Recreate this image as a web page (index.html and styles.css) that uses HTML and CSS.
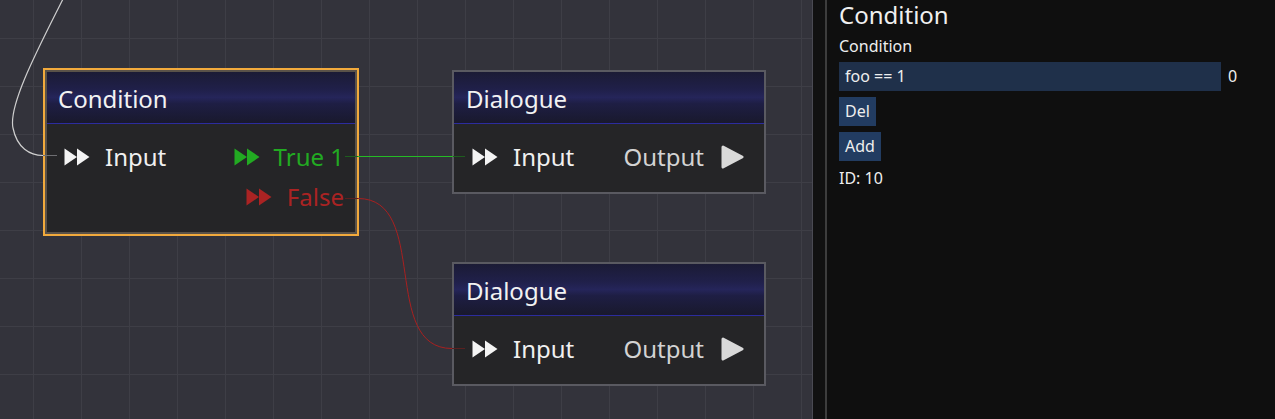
FILE: index.html
```html
<!DOCTYPE html>
<html>
<head>
<meta charset="utf-8">
<link rel="stylesheet" href="styles.css">
</head>
<body>
<div class="app">
  <div class="canvas">
    <div class="node selected node-cond">
      <div class="node-title">Condition</div>
      <div class="node-body">
        <div class="row">
          <div class="port">
            <svg class="ff" viewBox="0 0 26 18"><polygon points="0.5,0.5 13,9 0.5,17.5"/><polygon points="13,0.5 25.5,9 13,17.5"/></svg>
            <span class="port-label">Input</span>
          </div>
          <div class="port true">
            <svg class="ff" viewBox="0 0 26 18"><polygon points="0.5,0.5 13,9 0.5,17.5"/><polygon points="13,0.5 25.5,9 13,17.5"/></svg>
            <span class="port-label">True 1</span>
          </div>
        </div>
        <div class="row row-end">
          <div class="port false">
            <svg class="ff" viewBox="0 0 26 18"><polygon points="0.5,0.5 13,9 0.5,17.5"/><polygon points="13,0.5 25.5,9 13,17.5"/></svg>
            <span class="port-label">False</span>
          </div>
        </div>
      </div>
    </div>

    <div class="node node-dlg1">
      <div class="node-title">Dialogue</div>
      <div class="node-body">
        <div class="row row-dlg">
          <div class="port">
            <svg class="ff" viewBox="0 0 26 18"><polygon points="0.5,0.5 13,9 0.5,17.5"/><polygon points="13,0.5 25.5,9 13,17.5"/></svg>
            <span class="port-label">Input</span>
          </div>
          <div class="port out">
            <span class="port-label">Output</span>
            <svg class="play" viewBox="0 0 23 24"><polygon points="2,2 21,12 2,22"/></svg>
          </div>
        </div>
      </div>
    </div>

    <div class="node node-dlg2">
      <div class="node-title">Dialogue</div>
      <div class="node-body">
        <div class="row row-dlg">
          <div class="port">
            <svg class="ff" viewBox="0 0 26 18"><polygon points="0.5,0.5 13,9 0.5,17.5"/><polygon points="13,0.5 25.5,9 13,17.5"/></svg>
            <span class="port-label">Input</span>
          </div>
          <div class="port out">
            <span class="port-label">Output</span>
            <svg class="play" viewBox="0 0 23 24"><polygon points="2,2 21,12 2,22"/></svg>
          </div>
        </div>
      </div>
    </div>

    <svg class="wires" width="812" height="419" viewBox="0 0 812 419">
      <path class="w-white" d="M63,-1 C 40,45 8,105 13,128 C 17,148 30,155.5 43,155.5"/>
      <path class="w-white-stub" d="M43,155.5 H57"/>
      <path class="w-green" d="M358,156.5 H453"/>
      <path class="w-green-stub" d="M345,156.5 H358 M453,156.5 H465"/>
      <path class="w-red" d="M358,198.5 C 430,198.5 380,348.5 452,348.5"/>
      <path class="w-red-stub" d="M345,198.5 H358 M452,348.5 H465"/>
    </svg>
  </div>
  <div class="gutter"></div>
  <aside class="panel">
    <h1 class="panel-title">Condition</h1>
    <div class="panel-label">Condition</div>
    <div class="field-row">
      <div class="field">foo == 1</div>
      <span class="field-index">0</span>
    </div>
    <div class="btn">Del</div>
    <div class="btn">Add</div>
    <div class="panel-id">ID: 10</div>
  </aside>
</div>
</body>
</html>
```

FILE: styles.css
```css
html, body {
  margin: 0;
  padding: 0;
  background: #0f0f0f;
  font-family: "Noto Sans", "Open Sans", sans-serif;
  overflow: hidden;
}

.app {
  display: flex;
  width: 1275px;
  height: 419px;
}

.canvas {
  position: relative;
  width: 812px;
  height: 419px;
  flex: none;
  border-right: 1px solid #4a4a53;
  background-color: #33333b;
  background-image:
    linear-gradient(to right, #3e3e46 1px, transparent 1px),
    linear-gradient(to bottom, #3e3e46 1px, transparent 1px);
  background-size: 48px 48px;
  background-position: 33px 38px;
  overflow: hidden;
}

.gutter {
  width: 12px;
  flex: none;
  background: #111111;
  border-right: 2px solid #3d3d3d;
}

.node {
  position: absolute;
  box-sizing: border-box;
  border: 2px solid #5a5a61;
  background: #252527;
  display: flex;
  flex-direction: column;
}

.node.selected {
  border-color: #5a5249;
  outline: 2px solid #f2aa3c;
}

.node-cond { left: 45px; top: 70px; width: 312px; height: 164px; }
.node-dlg1 { left: 452px; top: 70px; width: 314px; height: 124px; }
.node-dlg2 { left: 452px; top: 262px; width: 314px; height: 124px; }

.node-title {
  height: 49px;
  padding-top: 2px;
  line-height: 49px;
  border-bottom: 1px solid #2c2c9e;
  padding-left: 11px;
  font-size: 24px;
  color: #f2f2f2;
  background: linear-gradient(to bottom, #1b1b35 0%, #20204a 35%, #25255a 50%, #1e1e44 62%, #19192d 100%);
}

.node-dlg1 .node-title, .node-dlg2 .node-title { padding-left: 12px; }

.node-body {
  padding-top: 13px;
}

.row {
  height: 40px;
  display: flex;
  align-items: center;
  justify-content: space-between;
  padding: 0 11px 0 17px;
}

.row-end { justify-content: flex-end; }

.row-dlg { padding: 0 20px 0 18px; }

.port {
  display: flex;
  align-items: center;
  gap: 15px;
  color: #f0f0f0;
  font-size: 24px;
  line-height: 40px;
}

.port.true { color: #22aa22; gap: 14px; }
.port.false { color: #aa2323; gap: 15px; }
.port.out { color: #d3d3d3; gap: 17px; }

.ff {
  width: 26px;
  height: 18px;
  display: block;
}

.port .ff { fill: #f4f4f4; }
.port.true .ff { fill: #22aa22; }
.port.false .ff { fill: #aa2323; }

.play {
  width: 23px;
  height: 24px;
  display: block;
  fill: #d9d9d9;
  stroke: #d9d9d9;
  stroke-width: 3;
  stroke-linejoin: round;
}

.wires {
  position: absolute;
  left: 0;
  top: 0;
  pointer-events: none;
  fill: none;
}

.w-white { stroke: #cfcfcf; stroke-width: 1.2; }
.w-white-stub { stroke: #6e6e72; stroke-width: 1; }
.w-green { stroke: #25bb25; stroke-width: 1; }
.w-green-stub { stroke: #1e5e1e; stroke-width: 1; }
.w-red { stroke: #a82020; stroke-width: 1; }
.w-red-stub { stroke: #5a2020; stroke-width: 1; }

.panel {
  flex: 1;
  background: #0f0f0f;
  padding-left: 12px;
  color: #eeeeee;
}

.panel-title {
  margin: 0;
  font-size: 24px;
  font-weight: 400;
  line-height: 30px;
  color: #f0f0f0;
}

.panel-label {
  margin-top: 6px;
  font-size: 16px;
  line-height: 20px;
}

.field-row {
  margin-top: 6px;
  display: flex;
  align-items: center;
  gap: 7px;
}

.field {
  width: 382px;
  height: 29px;
  box-sizing: border-box;
  padding-left: 6px;
  background: #1f304a;
  font-size: 16px;
  line-height: 29px;
}

.field-index {
  font-size: 16px;
  line-height: 29px;
}

.btn {
  margin-top: 6px;
  display: table;
  height: 29px;
  padding: 0 6px;
  background: #223c61;
  font-size: 16px;
  line-height: 29px;
}

.panel-id {
  margin-top: 7px;
  font-size: 16px;
  line-height: 20px;
}
```
